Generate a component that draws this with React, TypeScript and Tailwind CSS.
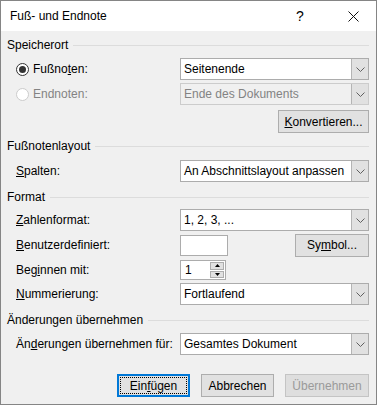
import React from 'react';

const Chevron = () => (
  <svg width="9" height="5" viewBox="0 0 9 5" className="block">
    <path d="M0.5 0.5 L4.5 4.5 L8.5 0.5" fill="none" stroke="#606060" strokeWidth="1" />
  </svg>
);

const Dropdown: React.FC<{ value: string; disabled?: boolean }> = ({ value, disabled }) => (
  <div
    className={`flex-1 h-[22px] flex border ${
      disabled ? 'border-[#cccccc] bg-[#f0f0f0] text-[#838383]' : 'border-[#acacac] bg-white text-black'
    }`}
  >
    <div className="flex-1 flex items-center pl-[3px]">{value}</div>
    <div className="w-[17px] h-full flex items-center justify-center bg-[#e1e1e1] border-l border-[#b4b4b4]">
      <Chevron />
    </div>
  </div>
);

const Button: React.FC<{ children: React.ReactNode; width: string; primary?: boolean; disabled?: boolean }> = ({
  children,
  width,
  primary,
  disabled,
}) => {
  if (primary) {
    return (
      <div className={`${width} h-[23px] border-2 border-[#0078d7] bg-[#e1e1e1] p-[1px]`}>
        <div className="w-full h-full border border-dotted border-black flex items-center justify-center">
          {children}
        </div>
      </div>
    );
  }
  return (
    <div
      className={`${width} h-[23px] border flex items-center justify-center ${
        disabled ? 'border-[#c4c4c4] bg-[#dedede] text-[#9a9a9a]' : 'border-[#adadad] bg-[#e1e1e1] text-black'
      }`}
    >
      {children}
    </div>
  );
};

const GroupHeader: React.FC<{ title: string; mt: string }> = ({ title, mt }) => (
  <div className={`${mt} h-[16px] flex items-center`}>
    <span>{title}</span>
    <div className="flex-1 h-px bg-[#dcdcdc] ml-[5px]" />
  </div>
);

const Radio: React.FC<{ checked?: boolean; disabled?: boolean }> = ({ checked, disabled }) => (
  <div
    className={`w-[13px] h-[13px] rounded-full border bg-white flex items-center justify-center ${
      disabled ? 'border-[#cccccc]' : 'border-[#333333]'
    }`}
  >
    {checked && <div className="w-[7px] h-[7px] rounded-full bg-[#333333]" />}
  </div>
);

const Label: React.FC<{ children: React.ReactNode }> = ({ children }) => (
  <div className="w-[164px] flex items-center">{children}</div>
);

export default function App() {
  return (
    <div className="w-[377px] h-[405px] border border-[#858585] bg-[#f0f0f0] flex flex-col text-[12px] leading-none text-black font-['Liberation_Sans',Arial,sans-serif]">
      {/* title bar */}
      <div className="h-[30px] bg-white flex items-center pl-[9px] shrink-0">
        <span className="flex-1">Fuß- und Endnote</span>
        <span className="text-[14px] w-[20px] text-center">?</span>
        <div className="w-[46px] flex justify-center ml-[20px]">
          <svg width="11" height="11" viewBox="0 0 11 11">
            <path d="M0.5 0.5 L10.5 10.5 M10.5 0.5 L0.5 10.5" stroke="#111" strokeWidth="1" />
          </svg>
        </div>
      </div>

      <div className="flex flex-col pl-[6px] pr-[7px]">
        <GroupHeader title="Speicherort" mt="mt-[6px]" />
        <div className="mt-[5px] h-[22px] flex pl-[9px]">
          <div className="w-[164px] flex items-center gap-[4px]">
            <Radio checked />
            <span>
              Fußno<u>t</u>en:
            </span>
          </div>
          <Dropdown value="Seitenende" />
        </div>
        <div className="mt-[3px] h-[22px] flex pl-[9px]">
          <div className="w-[164px] flex items-center gap-[4px] text-[#838383]">
            <Radio disabled />
            <span>Endnoten:</span>
          </div>
          <Dropdown value="Ende des Dokuments" disabled />
        </div>
        <div className="mt-[5px] flex justify-end">
          <Button width="w-[91px]">
            <span>
              <u>K</u>onvertieren...
            </span>
          </Button>
        </div>

        <GroupHeader title="Fußnotenlayout" mt="mt-[5px]" />
        <div className="mt-[6px] h-[22px] flex pl-[9px]">
          <Label>
            <span>
              <u>S</u>palten:
            </span>
          </Label>
          <Dropdown value="An Abschnittslayout anpassen" />
        </div>

        <GroupHeader title="Format" mt="mt-[7px]" />
        <div className="mt-[4px] h-[22px] flex pl-[9px]">
          <Label>
            <span>
              <u>Z</u>ahlenformat:
            </span>
          </Label>
          <Dropdown value="1, 2, 3, ..." />
        </div>
        <div className="mt-[3px] h-[22px] flex pl-[9px] items-center">
          <Label>
            <span>
              <u>B</u>enutzerdefiniert:
            </span>
          </Label>
          <div className="w-[48px] h-[21px] border border-[#acacac] bg-white" />
          <div className="flex-1" />
          <Button width="w-[74px]">
            <span>
              Sy<u>m</u>bol...
            </span>
          </Button>
        </div>
        <div className="mt-[3px] h-[22px] flex pl-[9px] items-center">
          <Label>
            <span>
              Beg<u>i</u>nnen mit:
            </span>
          </Label>
          <div className="w-[46px] h-[20px] border border-[#acacac] bg-white flex">
            <div className="flex-1 flex items-center pl-[4px]">1</div>
            <div className="w-[16px] flex flex-col p-[1px] gap-[1px]">
              <div className="flex-1 bg-[#e1e1e1] border border-[#adadad] flex items-center justify-center">
                <svg width="5" height="3" viewBox="0 0 5 3">
                  <path d="M2.5 0 L5 3 L0 3 Z" fill="#000" />
                </svg>
              </div>
              <div className="flex-1 bg-[#e1e1e1] border border-[#adadad] flex items-center justify-center">
                <svg width="5" height="3" viewBox="0 0 5 3">
                  <path d="M0 0 L5 0 L2.5 3 Z" fill="#000" />
                </svg>
              </div>
            </div>
          </div>
        </div>
        <div className="mt-[2px] h-[22px] flex pl-[9px]">
          <Label>
            <span>
              <u>N</u>ummerierung:
            </span>
          </Label>
          <Dropdown value="Fortlaufend" />
        </div>

        <GroupHeader title="Änderungen übernehmen" mt="mt-[7px]" />
        <div className="mt-[5px] h-[22px] flex pl-[9px]">
          <Label>
            <span>
              Än<u>d</u>erungen übernehmen für:
            </span>
          </Label>
          <Dropdown value="Gesamtes Dokument" />
        </div>

        <div className="mt-[19px] flex justify-end gap-[11px]">
          <Button width="w-[73px]" primary>
            <span>
              Ein<u>f</u>ügen
            </span>
          </Button>
          <Button width="w-[73px]">Abbrechen</Button>
          <Button width="w-[84px]" disabled>
            Übernehmen
          </Button>
        </div>
      </div>
    </div>
  );
}
